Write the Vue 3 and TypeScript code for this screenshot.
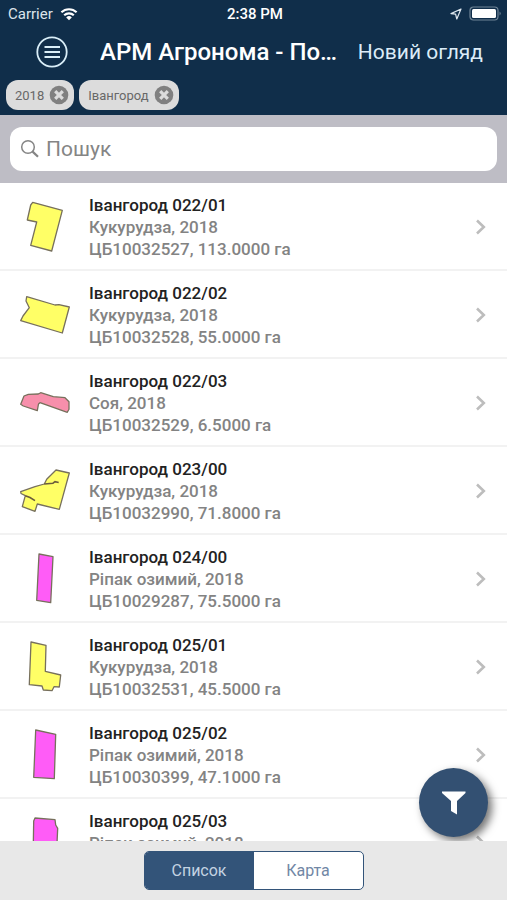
<script setup lang="ts">
import { ref } from 'vue'

interface Field {
  name: string
  crop: string
  info: string
  color: string
  shape: string
  cuts?: string
}

const yellow = '#ffff66'
const pink = '#f78fab'
const magenta = '#ff5cf7'

const fields: Field[] = [
  { name: 'Івангород 022/01', crop: 'Кукурудза, 2018', info: 'ЦБ10032527, 113.0000 га', color: yellow, shape: 'M17.7 5.3L47.3 13.3L36.7 54L15.7 48.3L21.7 25L12.3 23L15.7 8Z' },
  { name: 'Івангород 022/02', crop: 'Кукурудза, 2018', info: 'ЦБ10032528, 55.0000 га', color: yellow, shape: 'M11.7 11.7L40 20L44 19.7L54.3 22L47.3 48L5.7 35.6L8 31L14.3 22.7L11 16Z' },
  { name: 'Івангород 022/03', crop: 'Соя, 2018', info: 'ЦБ10032529, 6.5000 га', color: pink, shape: 'M5.7 31.3L9 23L13.3 21.3L23.3 21L25.7 19.7L38.3 23.7L50 24.7L54 28.7V36.3L52.3 39.3L25 29.7L23.5 31L22.3 37.7L8.3 33Z' },
  { name: 'Івангород 023/00', crop: 'Кукурудза, 2018', info: 'ЦБ10032990, 71.8000 га', color: yellow, shape: 'M5.7 30.7L20 25.7L29.3 23L31.7 18.3L41 9L54.3 12L44.3 48.3L22.3 43L20 50.3L7.3 45.7L10.3 34.7L6 32.5Z', cuts: 'M29.3 23L38 22.2L40 20.7L43.7 21.5M10.3 34.7L15 36.5L20 39.7' },
  { name: 'Івангород 024/00', crop: 'Ріпак озимий, 2018', info: 'ЦБ10029287, 75.5000 га', color: magenta, shape: 'M24 5L38 7.7L35.7 53.7L21.7 51.3Z' },
  { name: 'Івангород 025/01', crop: 'Кукурудза, 2018', info: 'ЦБ10032531, 45.5000 га', color: yellow, shape: 'M16 5L31 8.3L30.3 34.3L45.7 38L44.3 50L39 49.7L37 53.7L28.3 53L27 49L14.3 47.7Z' },
  { name: 'Івангород 025/02', crop: 'Ріпак озимий, 2018', info: 'ЦБ10030399, 47.1000 га', color: magenta, shape: 'M20.7 5L40.7 9.3L39.3 53.7L18.7 52.3Z' },
  { name: 'Івангород 025/03', crop: 'Ріпак озимий, 2018', info: '', color: magenta, shape: 'M20 5L40 6.7L40.7 12L42.7 15.3L41 52L18 50L18.7 8Z' },
]

const chips = ref<string[]>(['2018', 'Івангород'])
const query = ref('')
const view = ref<'list' | 'map'>('list')

function removeChip(chip: string) {
  chips.value = chips.value.filter((c) => c !== chip)
}
</script>

<template>
  <div class="app">
    <header class="header">
      <div class="status">
        <span class="carrier">
          Carrier
          <svg width="18" height="14" viewBox="0 0 18 14" aria-hidden="true">
            <path d="M1.4 5.3a11 11 0 0 1 15.2 0M4.2 8.3a7 7 0 0 1 9.6 0" fill="none" stroke="#fff" stroke-width="2.2" />
            <path d="M9 13.2L6.2 10.4a4 4 0 0 1 5.6 0Z" fill="#fff" />
          </svg>
        </span>
        <span class="time">2:38 PM</span>
        <span class="indicators">
          <svg width="12" height="12" viewBox="0 0 12 12" aria-hidden="true">
            <path d="M11 1L1 5.6L5.6 6.2L6.8 11Z" fill="none" stroke="#dfe8f0" stroke-width="1.2" stroke-linejoin="round" />
          </svg>
          <svg width="33" height="16" viewBox="0 0 33 16" aria-hidden="true">
            <rect x="1" y="1" width="28" height="13" rx="3.5" fill="none" stroke="#6f8496" stroke-width="1.2" />
            <rect x="3" y="3" width="24" height="9" rx="1.5" fill="#fff" />
            <path d="M30.6 5.5q2 2 0 4Z" fill="#8195a5" />
          </svg>
        </span>
      </div>
      <div class="nav">
        <button class="menu" type="button" aria-label="Меню">
          <svg width="32" height="32" viewBox="0 0 32 32">
            <circle cx="16" cy="16" r="14.7" fill="none" stroke="#d9eef8" stroke-width="1.8" />
            <path d="M8.5 11H24M8.5 16H24M8.5 21H24" stroke="#d9eef8" stroke-width="1.8" />
          </svg>
        </button>
        <h1 class="title">АРМ Агронома - Поля</h1>
        <button class="review" type="button">Новий огляд</button>
      </div>
      <div class="chips">
        <span v-for="chip in chips" :key="chip" class="chip">
          {{ chip }}
          <button class="remove" type="button" :aria-label="`Прибрати ${chip}`" @click="removeChip(chip)">
            <svg width="20" height="20" viewBox="0 0 20 20">
              <circle cx="10" cy="10" r="9.3" fill="#808080" />
              <path d="M6.2 6.2L13.8 13.8M13.8 6.2L6.2 13.8" stroke="#dcdcdc" stroke-width="3.2" />
            </svg>
          </button>
        </span>
      </div>
    </header>

    <div class="search">
      <label class="box">
        <svg width="20" height="20" viewBox="0 0 20 20" aria-hidden="true">
          <circle cx="8" cy="8" r="6.3" fill="none" stroke="#858585" stroke-width="1.5" />
          <path d="M12.6 12.6L18 17.8" stroke="#858585" stroke-width="2.2" />
        </svg>
        <input v-model="query" type="search" placeholder="Пошук" aria-label="Пошук" />
      </label>
    </div>

    <main class="content">
      <ul class="list">
        <li v-for="field in fields" :key="field.name">
          <a class="row" href="#">
            <svg class="shape" width="60" height="60" viewBox="0 0 60 60" aria-hidden="true">
              <path :d="field.shape" :fill="field.color" stroke="#77705c" stroke-width="1.3" stroke-linejoin="round" />
              <path v-if="field.cuts" :d="field.cuts" fill="none" stroke="#6b5c3c" stroke-width="1.6" />
            </svg>
            <span class="text">
              <strong>{{ field.name }}</strong>
              <span>{{ field.crop }}</span>
              <span>{{ field.info }}</span>
            </span>
            <svg width="12" height="16" viewBox="0 0 12 16" aria-hidden="true">
              <path d="M2 1.5L8.8 8L2 14.5" fill="none" stroke="#bdbdbd" stroke-width="2.6" />
            </svg>
          </a>
        </li>
      </ul>
      <button class="filter" type="button" aria-label="Фільтр">
        <svg width="24" height="24" viewBox="0 0 24 24">
          <path d="M0 .5H23.5V2L15 10V23.5L9 20V10L0 2Z" fill="#fff" />
        </svg>
      </button>
    </main>

    <footer class="footer">
      <div class="segments">
        <button type="button" :class="{ active: view === 'list' }" @click="view = 'list'">Список</button>
        <button type="button" :class="{ active: view === 'map' }" @click="view = 'map'">Карта</button>
      </div>
    </footer>
  </div>
</template>

<style>
body {
  margin: 0;
}
</style>

<style scoped>
.app {
  display: flex;
  flex-direction: column;
  height: 100vh;
  background: #fff;
  font-family: Roboto, "Liberation Sans", sans-serif;
}

button {
  border: 0;
  padding: 0;
  background: none;
  font: inherit;
  color: inherit;
  cursor: pointer;
}

svg {
  display: block;
  flex: none;
}

.header {
  flex: none;
  background: #102e4a;
  color: #fff;
}

.status {
  display: grid;
  grid-template-columns: 1fr auto 1fr;
  align-items: center;
  height: 28px;
  padding: 0 5px 0 8px;
  font-size: 15px;
}

.carrier {
  display: flex;
  align-items: center;
  gap: 7px;
  color: #dce4ea;
}

.time {
  font-weight: 500;
}

.indicators {
  display: flex;
  align-items: center;
  justify-content: flex-end;
  gap: 7px;
}

.nav {
  display: flex;
  align-items: center;
  height: 48px;
  padding: 0 24px 0 36px;
}

.title {
  flex: 1;
  min-width: 0;
  margin: 0 16px 0 32px;
  overflow: hidden;
  font-size: 24px;
  font-weight: 500;
  line-height: 32px;
  text-overflow: ellipsis;
  white-space: nowrap;
}

.review {
  flex: none;
  color: #dcecf8;
  font-size: 21px;
  line-height: 32px;
}

.chips {
  display: flex;
  gap: 5px;
  height: 30px;
  padding: 4px 6px 5px;
}

.chip {
  display: flex;
  align-items: center;
  gap: 5px;
  padding: 0 5px 0 9px;
  border-radius: 12px;
  background: #dcdcdc;
  color: #686868;
  font-size: 13px;
}

.search {
  flex: none;
  padding: 12px 10px;
  background: #bebdc5;
}

.box {
  display: flex;
  align-items: center;
  gap: 6px;
  height: 44px;
  padding: 0 10px;
  border-radius: 12px;
  background: #fff;
}

.box input {
  flex: 1;
  min-width: 0;
  border: 0;
  padding: 0;
  outline: 0;
  background: none;
  color: #333;
  font: 21px/32px Roboto, "Liberation Sans", sans-serif;
}

.box input::placeholder {
  color: #858585;
  opacity: 1;
}

.content {
  position: relative;
  flex: 1;
  min-height: 0;
}

.list {
  height: 100%;
  margin: 0;
  padding: 0;
  overflow-y: auto;
  list-style: none;
  scrollbar-width: none;
}

.row {
  display: flex;
  align-items: center;
  box-sizing: border-box;
  height: 88px;
  padding: 2px 20px 0 15px;
  border-bottom: 2px solid #f2f2f2;
  color: #838383;
  text-decoration: none;
}

.text {
  display: flex;
  flex: 1;
  flex-direction: column;
  min-width: 0;
  min-height: 66px;
  margin-left: 14px;
  font-size: 17px;
  font-weight: 500;
  line-height: 22px;
}

.text strong {
  color: #222;
  font-weight: 500;
}

.filter {
  position: absolute;
  right: 19px;
  bottom: 4px;
  display: grid;
  place-items: center;
  width: 69px;
  height: 69px;
  border-radius: 50%;
  background: #335072;
  box-shadow: 4px 4px 8px rgba(0, 0, 0, 0.55);
}

.footer {
  position: relative;
  display: flex;
  flex: none;
  justify-content: center;
  padding: 10px 0;
  background: #e8e8e8;
}

.segments {
  display: flex;
  overflow: hidden;
  border: 1px solid #335479;
  border-radius: 5px;
  background: #fff;
}

.segments button {
  width: 109px;
  height: 37px;
  color: #7187a5;
  font-size: 16px;
}

.segments .active {
  background: #335479;
  color: #c4d3e2;
}
</style>
